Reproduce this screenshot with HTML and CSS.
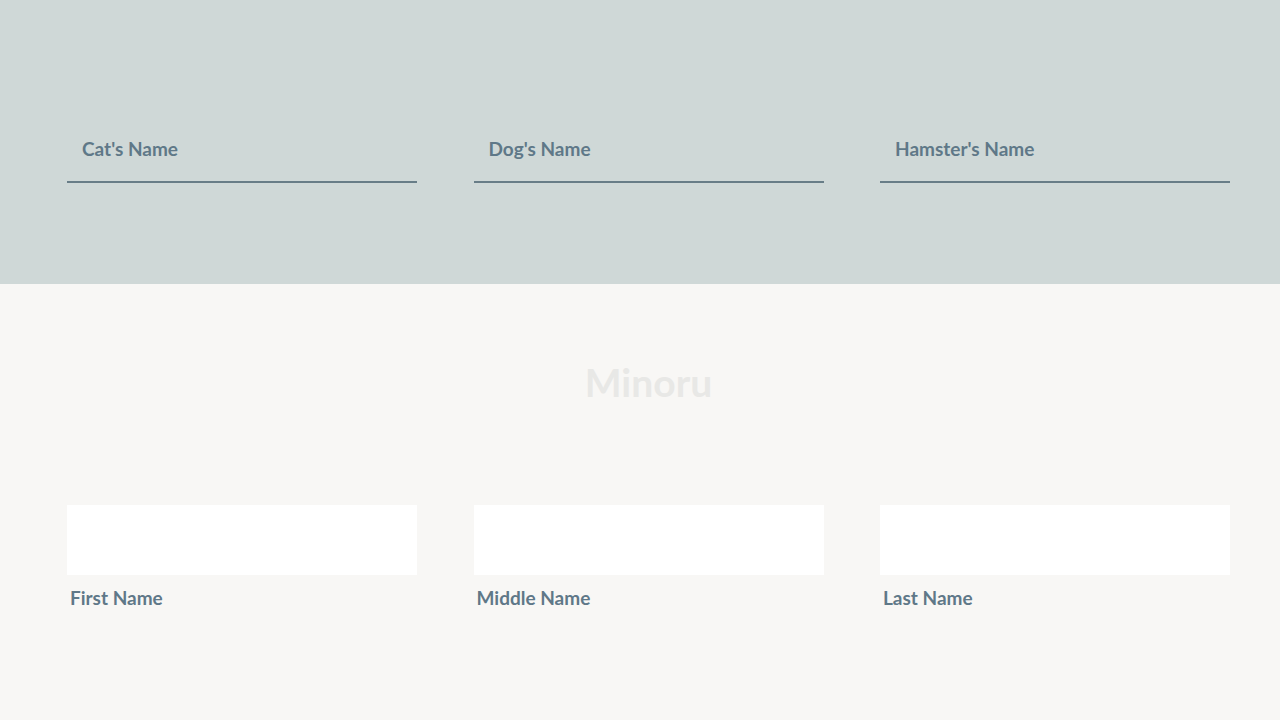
FILE: index.html
```html
<!DOCTYPE html>
<html>
<head>
<meta charset="utf-8">
<link rel="stylesheet" href="styles.css">
</head>
<body>
<section class="top">
  <div class="row">
    <div class="field"><span class="ph">Cat's Name</span></div>
    <div class="field"><span class="ph">Dog's Name</span></div>
    <div class="field"><span class="ph">Hamster's Name</span></div>
  </div>
</section>
<section class="bottom">
  <h1 class="title">Minoru</h1>
  <div class="row">
    <div class="boxfield"><div class="box"></div><label class="lbl">First Name</label></div>
    <div class="boxfield"><div class="box"></div><label class="lbl">Middle Name</label></div>
    <div class="boxfield"><div class="box"></div><label class="lbl">Last Name</label></div>
  </div>
</section>
</body>
</html>
```
FILE: styles.css
```css
html, body { margin: 0; padding: 0; }
body {
  font-family: "Lato", "Open Sans", sans-serif;
  background: #f8f7f5;
  width: 1280px;
  height: 720px;
  overflow: hidden;
}
.row {
  margin-left: 67px;
  width: 1163px;
  display: flex;
  justify-content: space-between;
}
.top {
  background: #cfd8d7;
  height: 284px;
  padding-top: 131px;
  box-sizing: border-box;
}
.field {
  width: 350px;
  height: 52px;
  border-bottom: 2px solid #687d87;
  box-sizing: border-box;
  padding-left: 15px;
}
.ph {
  display: block;
  font-size: 19px;
  font-weight: 700;
  color: #5f7888;
  line-height: 36px;
}
.bottom {
  padding-top: 58px;
}
.title {
  margin: 0 0 0 67px;
  width: 1163px;
  text-align: center;
  font-size: 39px;
  font-weight: 700;
  color: #e8e8e6;
  line-height: 80px;
  height: 80px;
}
.bottom .row { margin-top: 83px; }
.boxfield { width: 350px; }
.box {
  height: 70px;
  background: #ffffff;
}
.lbl {
  display: block;
  padding-left: 3px;
  margin-top: 12px;
  font-size: 19px;
  font-weight: 700;
  color: #5f7888;
  line-height: 22px;
}
```
